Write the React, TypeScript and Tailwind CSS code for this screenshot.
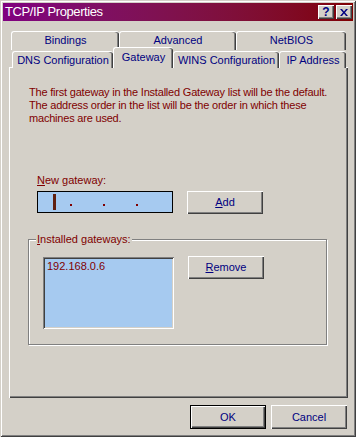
import React from 'react';

const raised = 'shadow-[inset_1px_1px_#ffffff,inset_-1px_-1px_#404040,inset_-2px_-2px_#808080]';

const Btn = ({ children, className = '' }: { children: React.ReactNode; className?: string }) => (
  <div className={`flex items-center justify-center bg-[#d4d0c8] text-[#000080] ${raised} ${className}`}>
    {children}
  </div>
);

const Tab = ({ label, w, selected = false }: { label: string; w: string; selected?: boolean }) => (
  <div
    className={`${w} flex items-center justify-center rounded-t-[3px] border-t border-l border-white bg-[#d4d0c8] text-[#000080] shadow-[inset_-1px_0_#404040,inset_-2px_0_#808080] ${
      selected ? 'relative z-10 h-[21px] pb-[2px]' : 'h-[17px]'
    }`}
  >
    {label}
  </div>
);

const App = () => {
  return (
    <div
      className="w-[356px] h-[437px] bg-[#d4d0c8] p-[3px] flex flex-col text-[11px] leading-[13px] shadow-[inset_1px_1px_#d4d0c8,inset_-1px_-1px_#404040,inset_2px_2px_#ffffff,inset_-2px_-2px_#808080]"
      style={{ fontFamily: '"Liberation Sans", Arial, sans-serif' }}
    >
      {/* title bar */}
      <div className="h-[18px] flex items-center justify-between pl-[2px] pr-[1px] bg-gradient-to-r from-[#800080] to-[#800000]">
        <span className="text-white text-[13px] leading-[16px] tracking-[-0.4px]">TCP/IP Properties</span>
        <div className="flex gap-[2px]">
          <Btn className="w-[16px] h-[14px] text-[12px] font-bold leading-none">?</Btn>
          <Btn className="w-[16px] h-[14px]">
            <svg width="8" height="7" viewBox="0 0 8 7">
              <path d="M0 0h2l2 2.5L6 0h2L5 3.5 8 7H6L4 4.5 2 7H0l3-3.5z" fill="#000080" />
            </svg>
          </Btn>
        </div>
      </div>

      {/* tabs */}
      <div className="mt-[10px] ml-[8px] flex">
        <div className="w-[108px] h-[19px] flex justify-center pt-[2px] rounded-t-[3px] border-t border-l border-white text-[#000080] shadow-[inset_-1px_0_#404040,inset_-2px_0_#808080]">Bindings</div>
        <div className="w-[117px] h-[19px] flex justify-center pt-[2px] rounded-t-[3px] border-t border-l border-white text-[#000080] shadow-[inset_-1px_0_#404040,inset_-2px_0_#808080]">Advanced</div>
        <div className="w-[110px] h-[19px] flex justify-center pt-[2px] rounded-t-[3px] border-t border-l border-white text-[#000080] shadow-[inset_-1px_0_#404040,inset_-2px_0_#808080]">NetBIOS</div>
      </div>
      <div className="-mt-[3px] ml-[9px] flex items-end h-[21px] -mb-[1px] relative z-10">
        <Tab label="DNS Configuration" w="w-[101px]" />
        <Tab label="Gateway" w="w-[60px]" selected />
        <Tab label="WINS Configuration" w="w-[106px]" />
        <Tab label="IP Address" w="w-[67px]" />
      </div>

      {/* panel */}
      <div className="ml-[6px] w-[339px] h-[331px] flex flex-col shadow-[inset_1px_1px_#ffffff,inset_-1px_-1px_#404040,inset_-2px_-2px_#808080]">
        <p className="ml-[20px] mt-[19px] text-[#800000] tracking-[-0.2px]">
          The first gateway in the Installed Gateway list will be the default.
          <br />
          The address order in the list will be the order in which these
          <br />
          machines are used.
        </p>

        <div className="ml-[28px] mt-[49px] text-[#800000]">
          <span className="underline">N</span>ew gateway:
        </div>
        <div className="ml-[28px] mt-[4px] flex items-start">
          <div className="w-[136px] h-[22px] border border-black bg-[#a6caf0] flex items-center pl-[15px]">
            <div className="w-[3px] h-[16px] bg-[#602010]" />
            <div className="ml-[14px] mt-[6px] w-[2px] h-[2px] bg-[#800000]" />
            <div className="ml-[31px] mt-[6px] w-[2px] h-[2px] bg-[#800000]" />
            <div className="ml-[31px] mt-[6px] w-[2px] h-[2px] bg-[#800000]" />
          </div>
          <Btn className="ml-[14px] w-[76px] h-[23px]">
            <span><span className="underline">A</span>dd</span>
          </Btn>
        </div>

        {/* group box */}
        <div className="relative ml-[19px] mt-[25px] w-[299px] h-[106px] border border-[#808080] shadow-[inset_1px_1px_#ffffff,1px_1px_#ffffff] flex items-start">
          <div className="absolute left-[7px] -top-[7px] px-[1px] bg-[#d4d0c8] text-[#800000]">
            <span className="underline">I</span>nstalled gateways:
          </div>
          <div className="ml-[14px] mt-[17px] w-[131px] h-[72px] bg-[#a6caf0] pl-[4px] pt-[3px] text-[#800000] shadow-[inset_1px_1px_#808080,inset_-1px_-1px_#ffffff,inset_2px_2px_#404040,inset_-2px_-2px_#d4d0c8]">
            192.168.0.6
          </div>
          <Btn className="ml-[14px] mt-[16px] w-[76px] h-[23px]">
            <span><span className="underline">R</span>emove</span>
          </Btn>
        </div>
      </div>

      {/* dialog buttons */}
      <div className="mt-[7px] mr-[6px] flex justify-end gap-[5px]">
        <div className="w-[76px] h-[24px] border border-black">
          <Btn className="w-full h-full">OK</Btn>
        </div>
        <Btn className="w-[76px] h-[24px]">Cancel</Btn>
      </div>
    </div>
  );
};

export default App;
